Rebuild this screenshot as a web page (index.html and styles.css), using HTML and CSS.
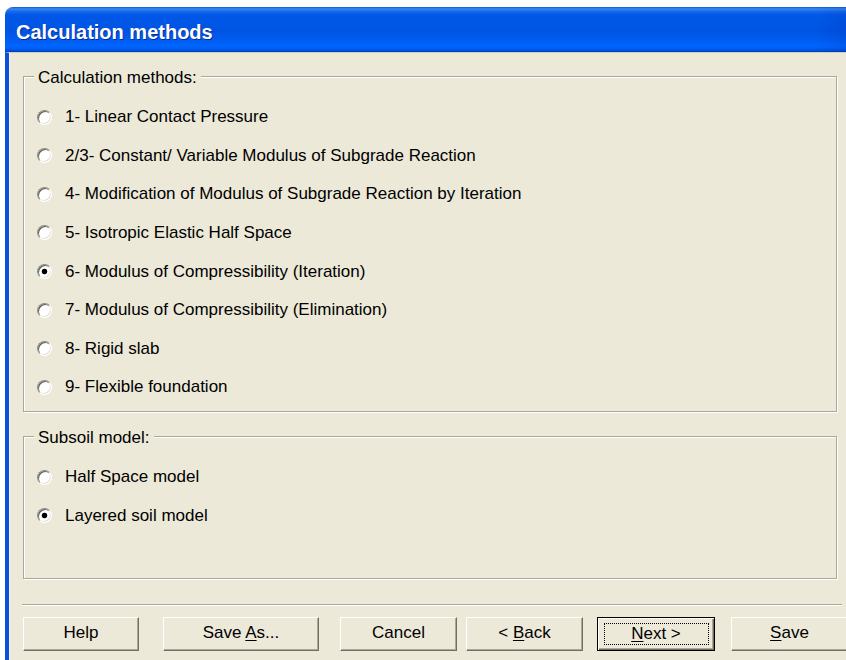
FILE: index.html
```html
<!DOCTYPE html>
<html lang="en">
<head>
<meta charset="utf-8">
<title>Calculation methods</title>
<link rel="stylesheet" href="styles.css">
</head>
<body>
<div class="window">
  <div class="titlebar"><span class="title">Calculation methods</span></div>
  <div class="client">
    <div class="group group-methods">
      <span class="group-title">Calculation methods:</span>
      <div class="options">
        <div class="option"><span class="radio"></span><span class="option-text">1- Linear Contact Pressure</span></div>
        <div class="option"><span class="radio"></span><span class="option-text">2/3- Constant/ Variable Modulus of Subgrade Reaction</span></div>
        <div class="option"><span class="radio"></span><span class="option-text">4- Modification of Modulus of Subgrade Reaction by Iteration</span></div>
        <div class="option"><span class="radio"></span><span class="option-text">5- Isotropic Elastic Half Space</span></div>
        <div class="option"><span class="radio checked"></span><span class="option-text">6- Modulus of Compressibility (Iteration)</span></div>
        <div class="option"><span class="radio"></span><span class="option-text">7- Modulus of Compressibility (Elimination)</span></div>
        <div class="option"><span class="radio"></span><span class="option-text">8- Rigid slab</span></div>
        <div class="option"><span class="radio"></span><span class="option-text">9- Flexible foundation</span></div>
      </div>
    </div>

    <div class="group group-subsoil">
      <span class="group-title">Subsoil model:</span>
      <div class="options">
        <div class="option"><span class="radio"></span><span class="option-text">Half Space model</span></div>
        <div class="option"><span class="radio checked"></span><span class="option-text">Layered soil model</span></div>
      </div>
    </div>

    <div class="separator"></div>

    <div class="buttons">
      <div class="btn btn-help"><span>Help</span></div>
      <div class="btn btn-saveas"><span>Save <u>A</u>s...</span></div>
      <div class="btn btn-cancel"><span>Cancel</span></div>
      <div class="btn btn-back"><span>&lt; <u>B</u>ack</span></div>
      <div class="btn btn-next is-default"><span class="focus"><u>N</u>ext &gt;</span></div>
      <div class="btn btn-save"><span><u>S</u>ave</span></div>
    </div>
  </div>
</div>
</body>
</html>
```

FILE: styles.css
```css
html, body {
  margin: 0;
  height: 100%;
  overflow: hidden;
  background: #ffffff;
}

body {
  font-family: "Liberation Sans", Arial, sans-serif;
  font-size: 17px;
  color: #000;
}

/* dialog window frame; its right part runs on past the view */
.window {
  box-sizing: border-box;
  margin: 7px 0 0 5px;
  width: calc(100% + 24px);
  height: calc(100% - 7px);
  border-radius: 8px 8px 0 0;
  overflow: hidden;
  display: flex;
  flex-direction: column;
}

.titlebar {
  flex: none;
  height: 45px;
  box-sizing: border-box;
  padding: 5px 0 0 11px;
  background:
    linear-gradient(to right, rgba(0, 20, 140, 0) 93%, rgba(0, 20, 140, 0.22) 100%),
    linear-gradient(to bottom,
      #0a5bd6 0px,
      #3a8af6 2px,
      #1a6aec 4px,
      #0058e8 8px,
      #0054e3 55%,
      #005ff5 78%,
      #0066ff 88%,
      #0058e8 95%,
      #003cb8 100%);
}

.title {
  display: block;
  font-weight: bold;
  font-size: 20px;
  line-height: 40px;
  color: #ffffff;
  text-shadow: 1px 1px #0a2a96;
}

.client {
  flex: 1;
  min-height: 0;
  background: #ece9d8;
  border-top: 1px solid #d2cfc0;
  border-left: 4px solid #0a4fe0;
  box-shadow: inset 1px 0 #f6f4ec;
  padding: 23px 0 0 14px;
}

/* etched group boxes */
.group {
  position: relative;
  box-sizing: border-box;
  width: 814px;
  border: 1px solid #aca899;
  box-shadow: inset 1px 1px #ffffff, 1px 1px #ffffff;
}

.group-methods {
  height: 336px;
  padding-top: 21px;
}

.group-subsoil {
  height: 143px;
  margin-top: 24px;
  padding-top: 21px;
}

.group-title {
  position: absolute;
  top: -9px;
  left: 10px;
  padding: 0 4px;
  line-height: 20px;
  background: #ece9d8;
}

.options {
  display: flex;
  flex-direction: column;
}

.option {
  display: flex;
  align-items: center;
  height: 38.57px;
}

.option-text {
  line-height: 20px;
  white-space: nowrap;
}

/* sunken round radio buttons */
.radio {
  box-sizing: border-box;
  flex: none;
  width: 15px;
  height: 15px;
  margin: 0 13px 0 13px;
  border-radius: 50%;
  border: 1px solid;
  border-color: #8e8c82 #ffffff #ffffff #8e8c82;
  background: #ffffff;
  box-shadow: inset 1px 1px #5c5b55, inset -1px -1px #e4e1d4;
}

.radio.checked {
  background: radial-gradient(circle, #000000 0 2.4px, #ffffff 3.2px);
}

.separator {
  margin: 25px 0 0 -1px;
  width: 820px;
  height: 0;
  border-top: 1px solid #aca899;
  border-bottom: 1px solid #ffffff;
}

/* push buttons */
.buttons {
  display: flex;
  margin-top: 11px;
}

.btn {
  box-sizing: border-box;
  flex: none;
  height: 34px;
  display: flex;
  align-items: center;
  justify-content: center;
  padding-bottom: 2px;
  line-height: 20px;
  white-space: nowrap;
  background: #ece9d8;
  border: 1px solid;
  border-color: #ffffff #716f64 #716f64 #ffffff;
  box-shadow: inset -1px -1px #aca899;
}

.btn u {
  text-underline-offset: 2px;
}

.btn-help { width: 116px; }
.btn-saveas { width: 156px; margin-left: 24px; }
.btn-cancel { width: 117px; margin-left: 21px; }
.btn-back { width: 117px; margin-left: 9px; }
.btn-next { width: 118px; margin-left: 14px; }
.btn-save { width: 117px; margin-left: 16px; }

.btn.is-default {
  border-color: #000000;
  box-shadow: inset 1px 1px #ffffff, inset -1px -1px #716f64, inset -2px -2px #aca899;
  padding-bottom: 0;
}

.focus {
  box-sizing: border-box;
  width: 105px;
  height: 22px;
  border: 1px dotted #000000;
  display: flex;
  align-items: center;
  justify-content: center;
  padding-bottom: 1px;
}
```
